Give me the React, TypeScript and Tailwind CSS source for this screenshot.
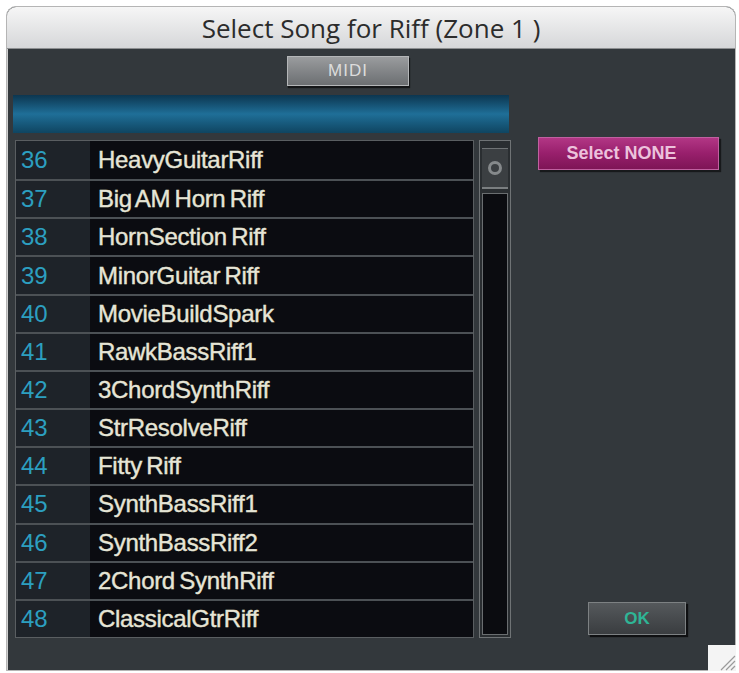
import React from "react";

const riffs: [number, string][] = [
  [36, "HeavyGuitarRiff"],
  [37, "Big AM Horn Riff"],
  [38, "HornSection Riff"],
  [39, "MinorGuitar Riff"],
  [40, "MovieBuildSpark"],
  [41, "RawkBassRiff1"],
  [42, "3ChordSynthRiff"],
  [43, "StrResolveRiff"],
  [44, "Fitty Riff"],
  [45, "SynthBassRiff1"],
  [46, "SynthBassRiff2"],
  [47, "2Chord SynthRiff"],
  [48, "ClassicalGtrRiff"],
];

function ResizeGrip() {
  return (
    <div className="absolute right-[3px] bottom-[2px] w-[28px] h-[26px] bg-[#f4f4f4]">
      <svg width="28" height="26" viewBox="0 0 28 26">
        <path d="M27 11 L13 25 M27 16 L18 25 M27 21 L23 25" stroke="#9a9a9a" strokeWidth="1.2" />
      </svg>
    </div>
  );
}

function Scrollbar() {
  return (
    <div className="w-[32px] h-[498px] flex flex-col border border-[#6f7375] bg-[#2a2e31] p-[2px]">
      <div className="h-[6px] border-b border-[#6f7375]" />
      <div className="h-[40px] bg-[#3b3f42] border-b-2 border-[#7a7e80] flex items-center justify-center">
        <div className="w-[14px] h-[14px] rounded-full border-[3px] border-[#85898b]" />
      </div>
      <div className="h-[4px]" />
      <div className="flex-1 bg-[#0b0c10] border border-[#6a6e70]" />
    </div>
  );
}

export default function App() {
  return (
    <div className="w-[739px] h-[673px] bg-white relative" style={{ fontFamily: "'Liberation Sans', Arial, sans-serif" }}>
      <div className="absolute left-[6px] top-[6px] w-[730px] h-[665px] rounded-t-[10px] border border-[#b5b5b5] bg-[#33383c] flex flex-col overflow-hidden">
        {/* title bar */}
        <div className="h-[42px] shrink-0 bg-gradient-to-b from-[#f6f6f6] to-[#d6d7d9] border-b border-[#8d8f91] flex items-center justify-center">
          <span className="text-[26px] text-[#2c2c2c] leading-none" style={{ fontFamily: "'Open Sans', sans-serif" }}>
            Select Song for Riff (Zone 1 )
          </span>
        </div>

        {/* body */}
        <div className="flex-1 flex flex-col pl-[5px] border-l border-[#d0d0d0]">
          <button className="mt-[7px] ml-[274px] w-[122px] h-[30px] bg-gradient-to-b from-[#9a9c9e] to-[#6c6f72] border border-[#b4b6b8] shadow-[1px_2px_1px_rgba(0,0,0,0.6)] text-[17px] text-[#dcdcdc] tracking-[1px]">
            MIDI
          </button>

          <div className="mt-[9px] w-[496px] h-[38px] bg-gradient-to-b from-[#0c3650] via-[#1f6f98] to-[#0f4561]" />

          <div className="flex mt-[7px]">
            {/* song list */}
            <div className="ml-[2px] w-[459px] h-[498px] border border-[#5a5e61] flex flex-col">
              {riffs.map(([n, name], i) => (
                <div key={n} className={`h-[38.25px] flex ${i > 0 ? "border-t-2 border-[#4c5155]" : ""}`}>
                  <div className="w-[74px] bg-[#1e2329] flex items-center pl-[5px] text-[24px] text-[#2c9fc0]">{n}</div>
                  <div
                    className="flex-1 bg-[#0b0c11] flex items-center pl-[8px] text-[24px] text-[#e6e5d6] tracking-[-0.3px] [word-spacing:-2px]"
                    style={{ WebkitTextStroke: "0.4px #e6e5d6" }}
                  >
                    {name}
                  </div>
                </div>
              ))}
            </div>

            <div className="ml-[5px]">
              <Scrollbar />
            </div>

            {/* right column */}
            <div className="ml-[27px] w-[181px] flex flex-col">
              <button className="-mt-[3px] h-[33px] w-[181px] bg-gradient-to-b from-[#b23685] via-[#981f6c] to-[#7e1556] border border-[#c060a0] shadow-[2px_2px_1px_rgba(0,0,0,0.55)] text-[18px] font-bold text-[#ecc2dc] pr-[14px]">
                Select NONE
              </button>
              <button className="mt-[432px] ml-[50px] w-[98px] h-[33px] bg-gradient-to-b from-[#55595c] to-[#3a3d40] border border-[#7d8183] shadow-[2px_2px_1px_rgba(0,0,0,0.7)] text-[17px] font-bold text-[#2fb596]">
                OK
              </button>
            </div>
          </div>
        </div>
      </div>
      <ResizeGrip />
    </div>
  );
}
